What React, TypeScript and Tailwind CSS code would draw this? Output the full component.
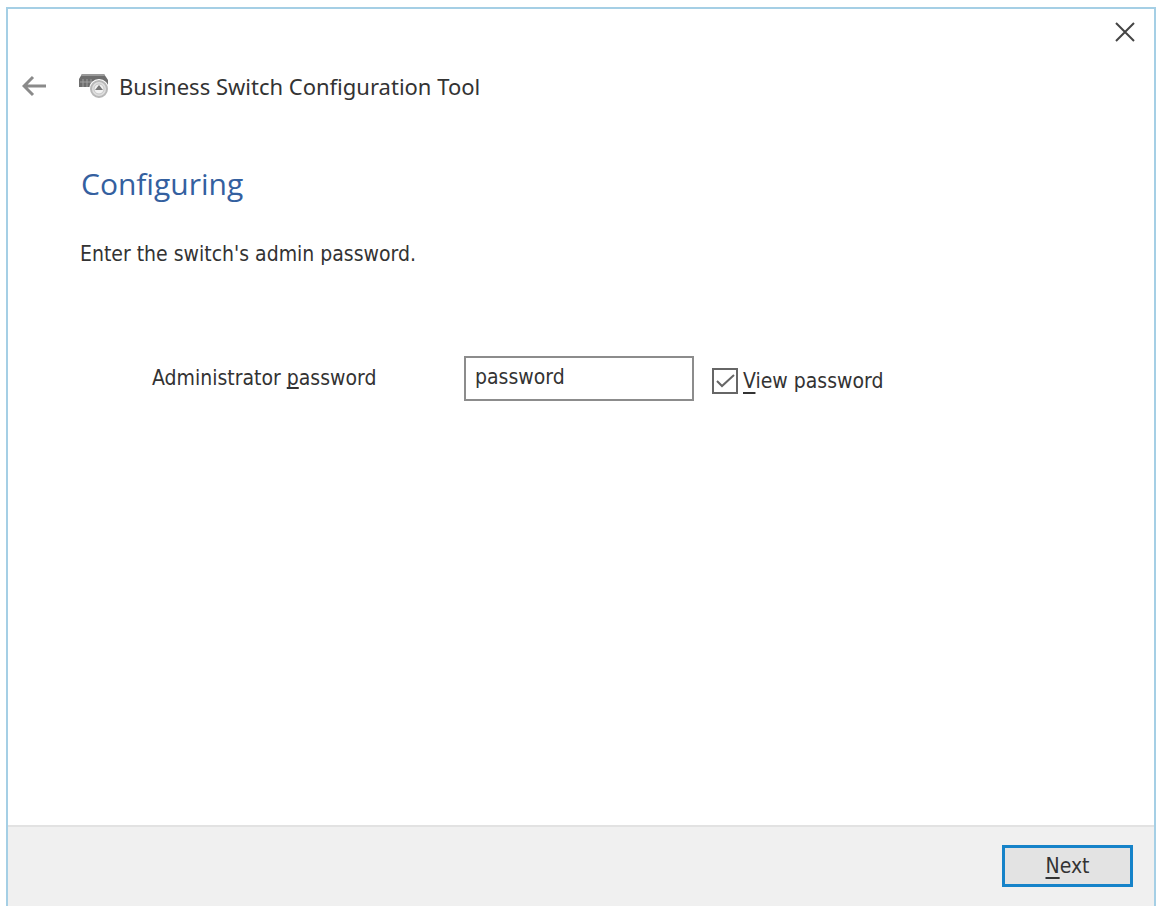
import { useState } from 'react'

function BackIcon() {
  return (
    <svg width="26" height="22" viewBox="0 0 26 22" fill="none" stroke="#8a8a8a" strokeWidth="3">
      <path d="M24 11H2M11 2L2 11l9 9" />
    </svg>
  )
}

function CloseIcon() {
  return (
    <svg width="20" height="20" viewBox="0 0 20 20" fill="none" stroke="#444" strokeWidth="2">
      <path d="M1 1l18 18M19 1L1 19" />
    </svg>
  )
}

// switch chassis with a disc in front of it
function SwitchIcon() {
  return (
    <svg width="30" height="26" viewBox="0 0 30 26" fill="none">
      <path d="M3 1h22l4 6v7H0V6z" fill="#6e6e6e" />
      <path d="M3 1h22l1 2H2z" fill="#9a9a9a" />
      <path d="M1 9h13M4 6v8M8 6v8M12 6v8" stroke="#a0a0a0" />
      <circle cx="20" cy="16" r="10" fill="#fff" />
      <circle cx="20" cy="16" r="8" fill="#dedede" stroke="#b8b8b8" strokeWidth="2" />
      <circle cx="20" cy="16" r="5" fill="#f2f2f2" stroke="#c6c6c6" />
      <path d="M16 17l4-5 4 5z" fill="#777" />
    </svg>
  )
}

export default function App() {
  const [password, setPassword] = useState('password')
  const [visible, setVisible] = useState(true)

  return (
    <div className="min-h-screen flex flex-col bg-white pt-[7px] pl-[6px] pr-px text-[#333] [font-family:'DejaVu_Sans_Condensed','DejaVu_Sans',sans-serif] text-[21px] leading-6">
      <main className="flex-1 flex flex-col border-2 border-b-0 border-[#a5cfe5]">
        {/* TITLE BAR */}
        <div className="flex justify-end pt-[13px] pr-[19px]">
          <button aria-label="Close" className="block">
            <CloseIcon />
          </button>
        </div>

        <header className="flex items-center pl-[14px] pt-[28px] [font-family:'Noto_Sans',sans-serif] text-[22px] leading-8">
          <button aria-label="Back" className="w-[57px]">
            <BackIcon />
          </button>
          <SwitchIcon />
          <span className="pl-[10px]">Business Switch Configuration Tool</span>
        </header>

        {/* PAGE */}
        <section className="flex-1 pl-[72px] pr-8 pt-[62px]">
          <h1 className="pl-px [font-family:'Open_Sans',sans-serif] text-[30px] leading-10 text-[#34609f]">
            Configuring
          </h1>
          <p className="pt-[38px]">Enter the switch's admin password.</p>

          <div className="flex items-start pt-[90px] pl-[72px]">
            <label htmlFor="password" className="w-[312px] pt-[10px]">
              Administrator <u className="[text-decoration-skip-ink:none]">p</u>assword
            </label>
            <input
              id="password"
              type={visible ? 'text' : 'password'}
              value={password}
              onChange={(e) => setPassword(e.target.value)}
              className="w-[230px] h-[45px] border-2 border-[#8c8c8c] bg-white pl-[9px] pb-[4px] outline-none"
            />
            <label className="flex items-center gap-[5px] pl-[18px] pt-[12px]">
              <span className="grid">
                <input
                  type="checkbox"
                  checked={visible}
                  onChange={(e) => setVisible(e.target.checked)}
                  className="peer col-start-1 row-start-1 appearance-none size-[26px] border-2 border-[#666] bg-white"
                />
                <svg
                  className="col-start-1 row-start-1 size-[26px] pointer-events-none invisible peer-checked:visible"
                  viewBox="0 0 26 26"
                  fill="none"
                  stroke="#666"
                  strokeWidth="2"
                >
                  <path d="M5 13l5 5L22 7" />
                </svg>
              </span>
              <span>
                <u className="underline-offset-4">V</u>iew password
              </span>
            </label>
          </div>
        </section>

        {/* FOOTER */}
        <footer className="flex justify-end border-t-2 border-[#e2e2e2] bg-[#f0f0f0] pt-[18px] pr-[21px] pb-[19px]">
          <button className="w-[131px] h-[42px] border-[3px] border-[#1683c9] bg-[#e3e3e3]">
            <u className="underline-offset-4">N</u>ext
          </button>
        </footer>
      </main>
    </div>
  )
}
